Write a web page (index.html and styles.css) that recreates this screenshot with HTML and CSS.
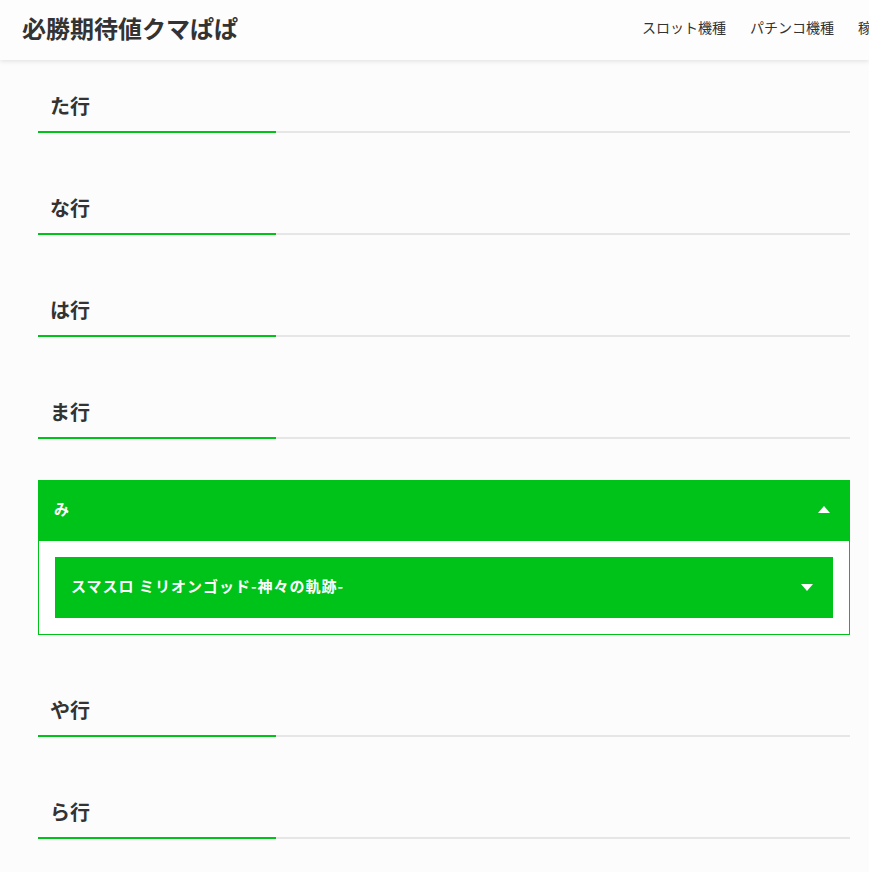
FILE: index.html
```html
<!DOCTYPE html>
<html lang="ja">
<head>
<meta charset="utf-8">
<title>必勝期待値クマぱぱ</title>
<link rel="stylesheet" href="styles.css">
</head>
<body>
<header class="site-header">
  <div class="site-title">必勝期待値クマぱぱ</div>
  <nav class="site-nav">
    <a class="nav-item">スロット機種</a>
    <a class="nav-item">パチンコ機種</a>
    <a class="nav-item">稼働日記</a>
  </nav>
</header>
<main class="content">
  <section class="section">
    <h2 class="row-heading">た行</h2>
  </section>
  <section class="section">
    <h2 class="row-heading">な行</h2>
  </section>
  <section class="section">
    <h2 class="row-heading">は行</h2>
  </section>
  <section class="section">
    <h2 class="row-heading">ま行</h2>
    <div class="accordion">
      <div class="accordion-head">
        <span class="label">み</span>
        <span class="tri tri-up"></span>
      </div>
      <div class="accordion-body">
        <div class="item-head">
          <span class="label">スマスロ ミリオンゴッド-神々の軌跡-</span>
          <span class="tri tri-down"></span>
        </div>
      </div>
    </div>
  </section>
  <section class="section">
    <h2 class="row-heading">や行</h2>
  </section>
  <section class="section">
    <h2 class="row-heading">ら行</h2>
  </section>
</main>
</body>
</html>
```
FILE: styles.css
```css
html, body {
  margin: 0;
  padding: 0;
  overflow-x: hidden;
}
body {
  background: #fcfcfc;
  color: #333;
  font-family: "Noto Sans CJK JP", "Noto Sans", sans-serif;
}
.site-header {
  height: 60px;
  display: grid;
  grid-template-columns: 620px auto;
  align-items: center;
  padding-left: 22px;
  background: #fdfdfd;
  box-shadow: 0 1px 5px rgba(0, 0, 0, 0.12);
  white-space: nowrap;
  overflow: hidden;
  position: relative;
  z-index: 1;
}
.site-title {
  font-size: 24px;
  font-weight: 700;
  color: #333;
  line-height: 1;
  margin-top: -5px;
}
.site-nav {
  display: flex;
  gap: 24px;
  margin-top: -6px;
}
.nav-item {
  font-size: 14px;
  color: #333;
  text-decoration: none;
}
.content {
  padding: 23px 19px 0 38px;
}
.section {
  margin-bottom: 52px;
}
.row-heading {
  position: relative;
  margin: 0;
  padding: 8px 12px 10px;
  font-size: 20px;
  line-height: 30px;
  font-weight: 700;
  color: #333;
  border-bottom: 2px solid #e6e6e6;
}
.row-heading::after {
  content: "";
  position: absolute;
  left: 0;
  bottom: -2px;
  width: 238px;
  height: 2px;
  background: #00c31a;
}
.accordion {
  margin-top: 41px;
  border: 1px solid #00c31a;
  background: #fff;
}
.accordion-head {
  height: 60px;
  display: flex;
  align-items: center;
  justify-content: space-between;
  padding: 0 19px 0 15px;
  background: #00c31a;
  color: #fff;
  font-size: 15px;
  font-weight: 700;
}
.accordion-body {
  padding: 16px;
}
.item-head {
  height: 61px;
  display: flex;
  align-items: center;
  justify-content: space-between;
  padding: 0 20px 0 16px;
  background: #00c31a;
  color: #fff;
  font-size: 15px;
  font-weight: 700;
  letter-spacing: 1px;
}
.label {
  margin-top: -5px;
}
.tri {
  width: 0;
  height: 0;
  border-left: 6.5px solid transparent;
  border-right: 6.5px solid transparent;
}
.tri-up {
  border-bottom: 7px solid #fff;
  margin-top: -4px;
}
.tri-down {
  border-top: 7px solid #fff;
  margin-top: 0;
}
```
